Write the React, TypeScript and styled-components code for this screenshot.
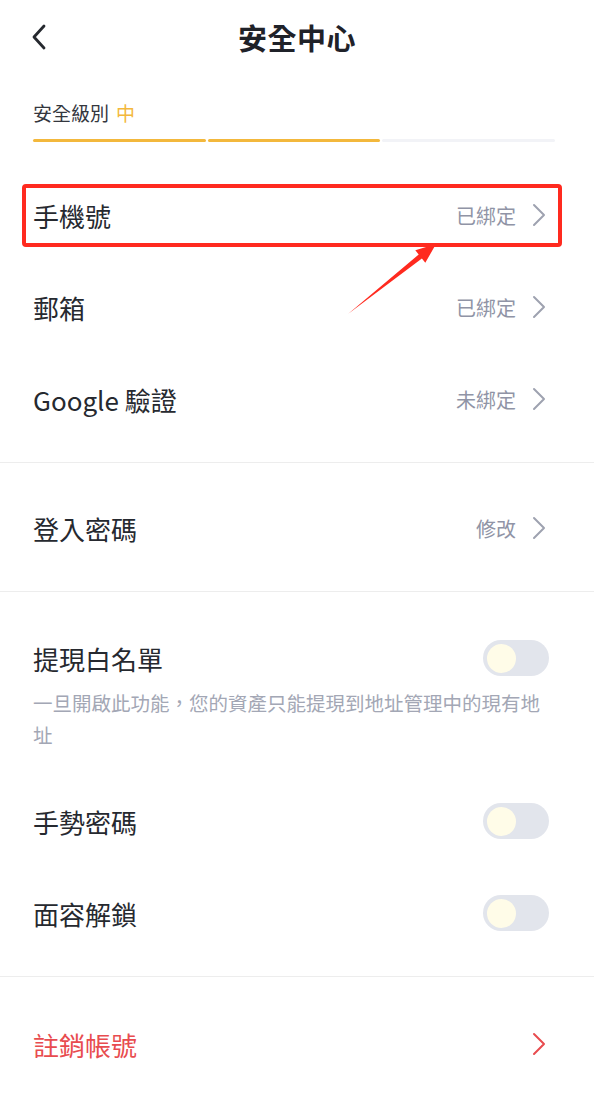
import React from 'react';
import styled, { createGlobalStyle } from 'styled-components';

const GlobalStyle = createGlobalStyle`
	html, body {
		margin: 0;
		padding: 0;
		background: #ffffff;
	}
	body {
		font-family: "Noto Sans CJK TC", "Noto Sans", sans-serif;
		color: #26292f;
	}
`;

const Page = styled.div`
	position: relative;
	width: 594px;
	min-height: 1104px;
	background: #ffffff;
	overflow: hidden;
`;

const NavBar = styled.div`
	position: relative;
	height: 74px;
	display: flex;
	align-items: center;
	justify-content: center;
`;

const BackButton = styled.button`
	position: absolute;
	left: 26px;
	top: 23px;
	width: 26px;
	height: 28px;
	padding: 0;
	border: none;
	background: none;
	display: flex;
	align-items: center;
	justify-content: center;
`;

const Title = styled.h1`
	margin: 0;
	font-size: 29px;
	font-weight: 700;
	color: #1f2229;
	letter-spacing: 0.5px;
`;

const LevelBlock = styled.div`
	padding: 27px 39px 0 33px;
`;

const LevelLabel = styled.div`
	font-size: 19px;
	line-height: 24px;
	color: #34373e;
`;

const LevelValue = styled.span`
	color: #f3b83c;
	margin-left: 7px;
`;

const Bar = styled.div`
	margin-top: 14px;
	display: grid;
	grid-template-columns: repeat(3, 1fr);
	gap: 2px;
`;

const Segment = styled.div<{ $on: boolean }>`
	height: 3px;
	border-radius: 2px;
	background: ${(p) => (p.$on ? '#f3b83c' : '#f2f3f7')};
`;

const Section = styled.div<{ $top?: number; $bottom?: number }>`
	padding: ${(p) => p.$top ?? 19}px 39px ${(p) => p.$bottom ?? 17}px 33px;
	border-bottom: 1px solid #ededed;

	&:last-child {
		border-bottom: none;
	}
`;

const Row = styled.div<{ $height?: number }>`
	position: relative;
	height: ${(p) => p.$height ?? 92}px;
	display: flex;
	align-items: center;
	justify-content: space-between;
`;

const Label = styled.div<{ $danger?: boolean }>`
	font-size: 26px;
	color: ${(p) => (p.$danger ? '#e84c4f' : '#26292f')};
`;

const Right = styled.div`
	display: flex;
	align-items: center;
	gap: 16px;
	margin-right: 9px;
`;

const Status = styled.span`
	font-size: 20px;
	color: #9094a6;
`;

const Highlight = styled.div`
	position: absolute;
	left: -11px;
	right: -7px;
	top: 15px;
	bottom: 14px;
	border: 4px solid #ff2a1f;
	border-radius: 4px;
	pointer-events: none;
`;

const WhitelistItem = styled.div`
	padding: 28px 0 24px;
`;

const Desc = styled.p`
	margin: 10px 0 0;
	font-size: 19.5px;
	line-height: 32px;
	color: #a3a7b5;
`;

const Switch = styled.div`
	width: 66px;
	height: 36px;
	margin-right: 6px;
	border-radius: 18px;
	background: #e2e5ec;
	display: flex;
	align-items: center;
	padding-left: 4px;
	box-sizing: border-box;
`;

const Knob = styled.div`
	width: 29px;
	height: 29px;
	border-radius: 50%;
	background: #fffce8;
`;

const Annotation = styled.svg`
	position: absolute;
	left: 0;
	top: 0;
	pointer-events: none;
`;

const Chevron = ({ color = '#9ea2b0' }: { color?: string }) => (
	<svg width="14" height="24" viewBox="0 0 14 24" fill="none">
		<path d="M2 2 L12 12 L2 22" stroke={color} strokeWidth="2" strokeLinecap="round" strokeLinejoin="round" />
	</svg>
);

type LinkItem = {
	label: string;
	status?: string;
	highlight?: boolean;
};

const bindings: Array<LinkItem> = [
	{ label: '手機號', status: '已綁定', highlight: true },
	{ label: '郵箱', status: '已綁定' },
	{ label: 'Google 驗證', status: '未綁定' },
];

const App = () => {
	return (
		<Page>
			<GlobalStyle />
			<NavBar>
				<BackButton aria-label="返回">
					<svg width="16" height="26" viewBox="0 0 16 26" fill="none">
						<path d="M13 2 L3 13 L13 24" stroke="#26292f" strokeWidth="2.8" strokeLinecap="round" strokeLinejoin="round" />
					</svg>
				</BackButton>
				<Title>安全中心</Title>
			</NavBar>

			<LevelBlock>
				<LevelLabel>
					安全級別<LevelValue>中</LevelValue>
				</LevelLabel>
				<Bar>
					<Segment $on={true} />
					<Segment $on={true} />
					<Segment $on={false} />
				</Bar>
			</LevelBlock>

			<Section $top={27}>
				{bindings.map((item) => (
					<Row key={item.label}>
						<Label>{item.label}</Label>
						<Right>
							<Status>{item.status}</Status>
							<Chevron />
						</Right>
						{item.highlight && <Highlight />}
					</Row>
				))}
			</Section>

			<Section>
				<Row>
					<Label>登入密碼</Label>
					<Right>
						<Status>修改</Status>
						<Chevron />
					</Right>
				</Row>
			</Section>

			<Section>
				<WhitelistItem>
					<Row $height={38}>
						<Label>提現白名單</Label>
						<Switch>
							<Knob />
						</Switch>
					</Row>
					<Desc>一旦開啟此功能，您的資產只能提現到地址管理中的現有地址</Desc>
				</WhitelistItem>
				<Row>
					<Label>手勢密碼</Label>
					<Switch>
						<Knob />
					</Switch>
				</Row>
				<Row>
					<Label>面容解鎖</Label>
					<Switch>
						<Knob />
					</Switch>
				</Row>
			</Section>

			<Section $top={21}>
				<Row>
					<Label $danger>註銷帳號</Label>
					<Right>
						<Chevron color="#e84c4f" />
					</Right>
				</Row>
			</Section>

			<Annotation width="594" height="1104" viewBox="0 0 594 1104">
				<polygon
					points="348,314 418.7,254.5 415.3,250.2 436,244 425.3,262.8 421.9,258.5"
					fill="#ff2a1f"
				/>
			</Annotation>
		</Page>
	);
};

export default App;
